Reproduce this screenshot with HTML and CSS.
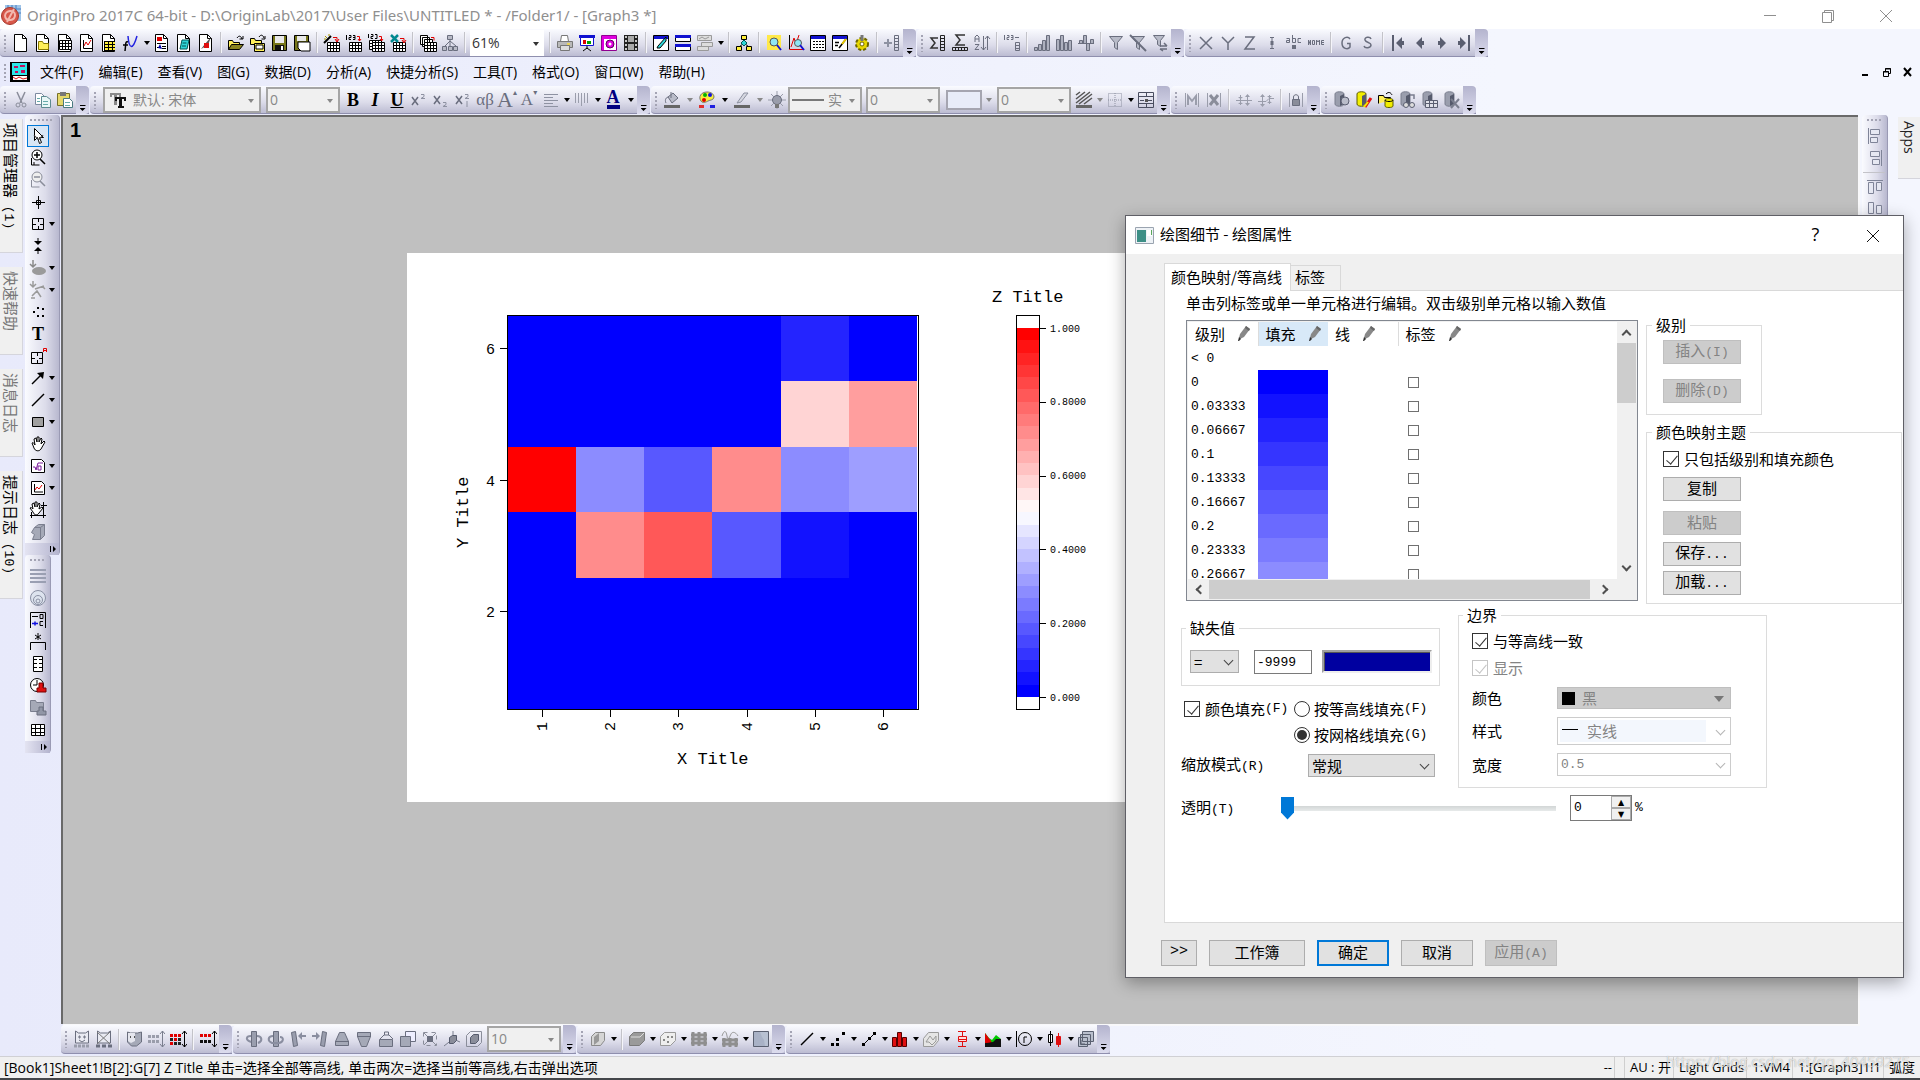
FILE: index.html
```html
<!DOCTYPE html>
<html lang="zh-CN">
<head>
<meta charset="utf-8">
<title>OriginPro 2017C 64-bit</title>
<link rel="stylesheet" href="styles.css">
</head>
<body>
<svg class="sprite" aria-hidden="true">
<defs>
<g id="page"><path d="M2.500 .5h8l4 4v13h-12z" fill="#fff" stroke="#000"/><path d="M10.500 .5v4h4" fill="none" stroke="#000"/></g>
<g id="tbl"><path d="M.5 .5h12v9h-12z" fill="#fff" stroke="#000"/><path d="M0 3.500h13M0 6.500h13M3.500 0v10M6.500 0v10M9.500 0v10" stroke="#000"/></g>
<g id="cyl"><path d="M2 3c0-3 9-3 9 0v10c0 3-9 3-9 0z"/><path d="M7 5v10l4-2V3z" fill="#555a6c" stroke="none"/></g>
</defs>
<symbol id="new" viewBox="0 0 18 18"><use href="#page"/></symbol>
<symbol id="folder-new" viewBox="0 0 18 18"><use href="#page"/><path d="M4.500 15.500v-8h4l1 2h5v6z" fill="#ffef5a" stroke="#8a7a00"/></symbol>
<symbol id="book" viewBox="0 0 18 18"><use href="#page"/><use href="#tbl" x="3" y="6"/></symbol>
<symbol id="graph" viewBox="0 0 18 18"><use href="#page"/><path d="M5.500 6v8.500H14" fill="none" stroke="#000"/><path d="M6 12l2-4 2 3 3-5" fill="none" stroke="#e00000"/></symbol>
<symbol id="matrix" viewBox="0 0 18 18"><use href="#page"/><path d="M4 7h11v9H4z" fill="#ffef3a"/><path d="M4 7.500h11M4 10.500h11M4 13.500h11M4 16.500h11M4.500 7v10M8.500 7v10M12.500 7v10" stroke="#000"/></symbol>
<symbol id="fx" viewBox="0 0 18 18"><path d="M6 2c1 14 5 14 9 0" fill="none" stroke="#2222e0" stroke-width="1.500"/><path d="M6 8c-3-1-2 2-3 9M1 11h5" fill="none" stroke="#000" stroke-width="1.500"/></symbol>
<symbol id="layout" viewBox="0 0 18 18"><use href="#page"/><path d="M4 3h5v4H4z" fill="#e00000"/><path d="M4 9.500h9M4 13.500h3M9 12.500h4M9 14.500h4" stroke="#000"/><path d="M5 14l2-4 2 5z" fill="#00a"/></symbol>
<symbol id="notes" viewBox="0 0 18 18"><use href="#page"/><path d="M7 6h7l-2 9H5z" fill="#2ed5d8" stroke="#055"/><path d="M7.500 9h4M7 12h4" stroke="#055"/></symbol>
<symbol id="image" viewBox="0 0 18 18"><use href="#page"/><path d="M4 15l4-5 6-7-3 8z" fill="#555"/><path d="M7 9h5v5H7z" fill="#e01010"/></symbol>
<symbol id="open" viewBox="0 0 18 18"><path d="M1.500 15.500v-9h4l1 2h6v3" fill="#ffef5a" stroke="#000"/><path d="M1.500 15.500l3-5h12l-4 5z" fill="#8a8420" stroke="#000"/><path d="M10 4c2-3 4-2 5 1M12.500 5H16V2" fill="none" stroke="#000"/></symbol>
<symbol id="open2" viewBox="0 0 18 18"><path d="M1.500 10.500v-6h4l1 2h6v4z" fill="#ffef5a" stroke="#000"/><path d="M5.500 17.500v-8h10v8z" fill="#ffef5a" stroke="#000"/><path d="M7 11h7v4H7z" fill="#fff" stroke="#000"/><path d="M10 3c2-3 4-2 5 1M12.500 5H16V2" fill="none" stroke="#000"/></symbol>
<symbol id="save" viewBox="0 0 18 18"><path d="M1.500 1.500h14v15h-14z" fill="#77761a" stroke="#000"/><path d="M4 2h9v7H4z" fill="#e9e9e9"/><path d="M4 11h9v5H4z" fill="#111"/><path d="M10 12h2v4h-2z" fill="#fff"/></symbol>
<symbol id="save2" viewBox="0 0 18 18"><path d="M1.500 1.500h14v15h-14z" fill="#77761a" stroke="#000"/><path d="M4 2h9v5H4z" fill="#e9e9e9"/><path d="M5 8h12v9H8l-3-3z" fill="#fff" stroke="#000"/></symbol>
<symbol id="imp1" viewBox="0 0 18 18"><use href="#tbl" x="4" y="8"/><path d="M1 9l7-7" stroke="#000" stroke-width="2"/><path d="M2 2l2 2M6 0v2M1 5h2" stroke="#a90"/><path d="M10 3.500h4v4M12 5l2 3 2-3" fill="none" stroke="#e00000"/></symbol>
<symbol id="imp2" viewBox="0 0 18 18"><use href="#tbl" x="4" y="8"/><path d="M1.500 1v5M4 1.500h2v2H4v2h2M8 1.500h2v4H8M8 3.500h2" fill="none" stroke="#000"/><path d="M12 2.500h2.500v4M13 5l1.500 2L16 5" fill="none" stroke="#e00000"/></symbol>
<symbol id="imp3" viewBox="0 0 18 18"><use href="#tbl" x="2" y="6"/><use href="#tbl" x="5" y="8"/><path d="M1.500 0v4M4 .5h2v2H4v2h2M8 .5h2v4H8" fill="none" stroke="#000"/><path d="M12 2.500h2.500v4M13 5l1.500 2L16 5" fill="none" stroke="#e00000"/></symbol>
<symbol id="xls" viewBox="0 0 18 18"><use href="#tbl" x="4" y="8"/><path d="M2 1l7 7M9 1L2 8" stroke="#00888f" stroke-width="2.500"/><path d="M11 4.500h4v4M13 6l2 3 2-3" fill="none" stroke="#e00000"/></symbol>
<symbol id="batch" viewBox="0 0 18 18"><path d="M1.500 1.500h7v9h-7z M3.500 3.500h7v9h-7z M5.500 5.500h8v10h-8z" fill="#fff" stroke="#000"/><use href="#tbl" x="5" y="8"/><path d="M12 3.500h3v3" fill="none" stroke="#e00000"/></symbol>
<symbol id="tree-g" viewBox="0 0 18 18"><path d="M6.500 1.500h5v4h-5z M1.500 12.500h4v4h-4z M7.500 12.500h4v4h-4z M12.500 12.500h4v4h-4z M9 6v6M9 7l-5 5M9 7l6 5" fill="#b8bac6" stroke="#6a6e7e"/></symbol>
<symbol id="tree" viewBox="0 0 18 18"><path d="M9 5v4M4 13l5-4 5 4" fill="none" stroke="#000"/><path d="M6.500 1.500h5v4h-5z M1.500 12.500h5v4h-5z M11.500 12.500h5v4h-5z" fill="#ffef3a" stroke="#000"/><path d="M6 9l3-3 3 3-3 3z" fill="#2ed5d8" stroke="#055"/></symbol>
<symbol id="print" viewBox="0 0 18 18"><path d="M4.500 7.500l1-6h6l1 6" fill="#fff" stroke="#777"/><path d="M1.500 7.500h15v6h-15z" fill="#b9b9b9" stroke="#777"/><path d="M4.500 11.500h9v5h-9z" fill="#ddd" stroke="#777"/><path d="M11 9h3v2h-3z" fill="#e8d35a"/></symbol>
<symbol id="slides" viewBox="0 0 18 18"><path d="M1 1h16v3H1z" fill="#1111d0"/><path d="M2.500 3.500h13v8h-13z" fill="#fff" stroke="#1111d0"/><path d="M9 12v3M5 17l4-3 4 3" fill="none" stroke="#000"/><path d="M5 6h3v4H5z" fill="#e00000"/><path d="M9 7h4v3H9z" fill="#00a000"/></symbol>
<symbol id="gallery" viewBox="0 0 18 18"><path d="M1.500 1.500h15v15h-15z" fill="#fff" stroke="#900090"/><path d="M2 2h14v3H2zM2 5h2v11H2z" fill="#e000e0"/><circle cx="10" cy="10" r="4" fill="#e000e0" stroke="#600060"/><circle cx="10" cy="10" r="1.500" fill="#fff"/></symbol>
<symbol id="film" viewBox="0 0 18 18"><path d="M2 1h14v16H2z" fill="#222"/><path d="M6 2h6v6H6z M6 10h6v6H6z" fill="#aaa"/><path d="M4 2v15M14 2v15" stroke="#fff" stroke-width="1.500" stroke-dasharray="2 2"/></symbol>
<symbol id="tool1" viewBox="0 0 18 18"><path d="M1.500 1.500h15v15h-15z" fill="#fff" stroke="#000"/><path d="M2 2h14v3H2z" fill="#1111d0"/><path d="M6 12l8-9v4l-6 7H5z" fill="#2ed5d8" stroke="#000"/></symbol>
<symbol id="tool2" viewBox="0 0 18 18"><path d="M1.500 1.500h15v6h-15z M1.500 10.500h15v6h-15z" fill="#fff" stroke="#000"/><path d="M1 1h16v3H1z M1 10h16v3H1z" fill="#1111d0"/></symbol>
<symbol id="tool3" viewBox="0 0 18 18"><path d="M1.500 1.500h14v5h-14z M5.500 8.500h11v4h-11z M1.500 12.500h11v4h-11z" fill="#ddd" stroke="#9a9a9a"/><path d="M3 5l3-2 3 2 4-2" fill="none" stroke="#9a9a9a"/></symbol>
<symbol id="zoom-y" viewBox="0 0 18 18"><path d="M2 1h14v15H2z" fill="#ffe94a"/><circle cx="9" cy="8" r="4" fill="#8fe6f5" stroke="#555"/><path d="M12 11l4 5" stroke="#1111d0" stroke-width="2"/></symbol>
<symbol id="zoom-x" viewBox="0 0 18 18"><path d="M2.500 1v14.500H17M4 13l3-9 2 6 3-9" fill="none" stroke="#e00000"/><path d="M2.500 1v14" stroke="#000"/><circle cx="11" cy="9" r="3.500" fill="#8fe6f5" stroke="#555"/><path d="M13 11l4 5" stroke="#1111d0" stroke-width="2"/></symbol>
<symbol id="results" viewBox="0 0 18 18"><path d="M1.500 1.500h15v15h-15z" fill="#fff" stroke="#000"/><path d="M2 2h14v3H2z" fill="#1111d0"/><path d="M4 7.500h11M4 10.500h11M4 13.500h11" stroke="#000" stroke-dasharray="2 1"/></symbol>
<symbol id="script" viewBox="0 0 18 18"><path d="M1.500 1.500h15v15h-15z" fill="#fff" stroke="#000"/><path d="M2 2h14v3H2z" fill="#1111d0"/><path d="M4 8.500h4M4 11.500h3M8 14l7-9" stroke="#000" stroke-width="1.500"/><path d="M11 10l4-5" stroke="#e8c800" stroke-width="2"/></symbol>
<symbol id="gear" viewBox="0 0 18 18"><circle cx="9" cy="10" r="6" fill="#e8d800" stroke="#6d6500" stroke-width="2" stroke-dasharray="3 2"/><circle cx="9" cy="10" r="2" fill="#fff" stroke="#6d6500"/><path d="M9 1v6" stroke="#777" stroke-width="3"/></symbol>
<symbol id="addcol" viewBox="0 0 18 18"><path d="M1 9h8M5 5v8" stroke="#8e92a2" stroke-width="2"/><path d="M11.500 1.500h4v15h-4zM11 4.500h5M11 7.500h5M11 10.500h5M11 13.500h5" fill="none" stroke="#6a6e7e"/></symbol>
<symbol id="sumcol" viewBox="0 0 18 18"><path d="M9 4H2l4 5-4 5h7" fill="none" stroke="#333" stroke-width="1.500"/><path d="M11.500 1.500h4v15h-4zM11 4.500h5M11 7.500h5M11 10.500h5M11 13.500h5" fill="none" stroke="#222"/></symbol>
<symbol id="sumrow" viewBox="0 0 18 18"><path d="M14 1H5l4 5-4 5h9" fill="none" stroke="#333" stroke-width="1.500"/><path d="M1.500 13.500h15v3h-15zM4.500 13v4M7.500 13v4M10.500 13v4M13.500 13v4" fill="none" stroke="#222"/></symbol>
<symbol id="sort" viewBox="0 0 18 18"><path d="M2 8V3l2-2 2 2v5M2 5h4M2 10.500h4l-4 5h4" fill="none" stroke="#6a6e7e"/><path d="M10.500 2v14M8 13l2.500 3 2.500-3M14.500 16V2M12 5l2.500-3L17 5" fill="none" stroke="#6a6e7e"/></symbol>
<symbol id="setcol" viewBox="0 0 18 18"><path d="M1.500 1v5M4 1.500h2v2H4v2h2M8 1.500h2v4H8M8 3.500h2M12 3.500h4M12.500 8.500h4v8h-4zM12 11.500h5M12 14.500h5" fill="none" stroke="#6a6e7e"/></symbol>
<symbol id="stair" viewBox="0 0 18 18"><path d="M1.500 13.500h3v3h-3zM5.500 10.500h3v6h-3zM9.500 6.500h3v10h-3zM13.500 1.500h3v15h-3z" fill="#aeb1bf" stroke="#6a6e7e"/></symbol>
<symbol id="hist" viewBox="0 0 18 18"><path d="M1.500 5.500h3v11h-3zM5.500 1.500h3v15h-3zM9.500 8.500h3v8h-3zM13.500 6.500h3v10h-3z" fill="#aeb1bf" stroke="#6a6e7e"/></symbol>
<symbol id="bars3" viewBox="0 0 18 18"><path d="M1 9.500h16M2.500 6.500h3v3h-3zM6.500 1.500h3v8h-3zM9.500 9.500h3v7h-3zM13.500 5.500h3v4h-3z" fill="#aeb1bf" stroke="#6a6e7e"/></symbol>
<symbol id="funnel" viewBox="0 0 18 18"><path d="M2.500 2.500h13l-5 6v7l-3-2v-5z" fill="#b8bbc8" stroke="#6a6e7e"/></symbol>
<symbol id="funnel-x" viewBox="0 0 18 18"><path d="M2.500 2.500h13l-5 6v7l-3-2v-5z" fill="#b8bbc8" stroke="#6a6e7e"/><path d="M1 1l16 16" stroke="#6a6e7e" stroke-width="2"/></symbol>
<symbol id="funnel-r" viewBox="0 0 18 18"><path d="M2.500 1.500h11l-4 5v6l-3-2v-4z" fill="#b8bbc8" stroke="#6a6e7e"/><path d="M9 12h7M13 9l3 3M16 15H9M12 17l-3-2" stroke="#6a6e7e" stroke-width="1.500"/></symbol>
<symbol id="lx" viewBox="0 0 18 18"><path d="M3 3l12 12M15 3L3 15" stroke="#6a6e7e" stroke-width="1.500"/></symbol>
<symbol id="ly" viewBox="0 0 18 18"><path d="M3 3l6 6v7M15 3L9 9" fill="none" stroke="#6a6e7e" stroke-width="1.500"/></symbol>
<symbol id="lz" viewBox="0 0 18 18"><path d="M4 3h9L4 15h10" fill="none" stroke="#6a6e7e" stroke-width="1.500"/></symbol>
<symbol id="err" viewBox="0 0 18 18"><path d="M9 3v12M7 3.500h4M7 14.500h4" stroke="#6a6e7e"/><path d="M7.500 7h3v4h-3z" fill="#6a6e7e"/></symbol>
<symbol id="abc" viewBox="0 0 18 18"><path d="M1.500 4.500h3v4h-3v-2h3M7.500 1v7.500h3v-4h-3M16 4.500h-3v4h3" fill="none" stroke="#6a6e7e"/><path d="M7 11h4v4H7z" fill="#6a6e7e"/></symbol>
<symbol id="none" viewBox="0 0 18 18"><path d="M1.500 11V6l2 5V6M5.500 6.500h2v4h-2zM9.500 11V6l1.500 2 1.500-2v5M17 6.500h-2.500v4H17M15 8.500h2" fill="none" stroke="#6a6e7e"/></symbol>
<symbol id="lg" viewBox="0 0 18 18"><path d="M13 5c-2-3-8-2-8 4s6 7 8 4V9.500h-3" fill="none" stroke="#6a6e7e" stroke-width="1.500"/></symbol>
<symbol id="ls" viewBox="0 0 18 18"><path d="M12 5c-1-3-7-2-6 1s6 2 6 5-6 4-7 1" fill="none" stroke="#6a6e7e" stroke-width="1.500"/></symbol>
<symbol id="first" viewBox="0 0 18 18"><path d="M4 1v16" stroke="#5a5e70" stroke-width="2"/><path d="M7 9l6-6v4h2v4h-2v4z" fill="#5a5e70"/></symbol>
<symbol id="prev" viewBox="0 0 18 18"><path d="M5 9l6-6v4h2v4h-2v4z" fill="#5a5e70"/></symbol>
<symbol id="next" viewBox="0 0 18 18"><path d="M13 9L7 3v4H5v4h2v4z" fill="#5a5e70"/></symbol>
<symbol id="last" viewBox="0 0 18 18"><path d="M14 1v16" stroke="#5a5e70" stroke-width="2"/><path d="M11 9L5 3v4H3v4h2v4z" fill="#5a5e70"/></symbol>
<symbol id="cut" viewBox="0 0 18 18"><path d="M5 1l5 11M13 1L8 12" stroke="#8a8d9a" stroke-width="1.500"/><circle cx="6" cy="14" r="2" fill="none" stroke="#8a8d9a"/><circle cx="12" cy="14" r="2" fill="none" stroke="#8a8d9a"/></symbol>
<symbol id="copy" viewBox="0 0 18 18"><path d="M1.500 2.500h6l3 3v8h-9z" fill="#fff" stroke="#7d8aa0"/><path d="M7.500 5.500h5l4 3v8h-9z" fill="#e9f7f7" stroke="#5d8a90"/><path d="M9 10.500h5M9 13.500h5M3 7.500h3M3 10.500h3" stroke="#6aa"/></symbol>
<symbol id="paste" viewBox="0 0 18 18"><path d="M1.500 2.500h12v12h-12z" fill="#e5d86a" stroke="#77702a"/><path d="M4 1h6v4H4z" fill="#777"/><path d="M7.500 7.500h6l3 3v6h-9z" fill="#fff" stroke="#4a7a80"/><path d="M9 11.500h5M9 14.500h5" stroke="#6aa"/></symbol>
<symbol id="sup" viewBox="0 0 18 18"><path d="M2 6l6 8M8 6l-6 8" stroke="#6a6e7e" stroke-width="1.500"/><path d="M11 3.500h3v2l-3 2h4" fill="none" stroke="#8e92a2"/></symbol>
<symbol id="sub" viewBox="0 0 18 18"><path d="M2 5l6 8M8 5l-6 8" stroke="#6a6e7e" stroke-width="1.500"/><path d="M11 11.500h3v2l-3 2h4" fill="none" stroke="#8e92a2"/></symbol>
<symbol id="supsub" viewBox="0 0 18 18"><path d="M2 5l6 8M8 5l-6 8" stroke="#6a6e7e" stroke-width="1.500"/><path d="M11 3.500h3v2l-3 2h4M13 10v6" fill="none" stroke="#8e92a2"/></symbol>
<symbol id="alignl" viewBox="0 0 18 18"><path d="M2 3.500h14M2 6.500h9M2 9.500h14M2 12.500h9M2 15.500h14" stroke="#8e92a2"/></symbol>
<symbol id="vlines" viewBox="0 0 18 18"><path d="M2.500 2v10M5.500 2v10M8.500 2v13M11.500 2v10M14.500 2v10" stroke="#9a9dab"/></symbol>
<symbol id="bucket" viewBox="0 0 18 18"><path d="M5 6l5-4 5 5-6 5z" fill="#b8bbc8" stroke="#6a6e7e"/><path d="M5 6c-3 1-3 4-2 6M8 1v6" fill="none" stroke="#6a6e7e"/><path d="M1 14h16v3H1z" fill="#666"/></symbol>
<symbol id="palette" viewBox="0 0 18 18"><path d="M9 1c-6 0-9 5-6 9 2 3 5 1 7 0 2-1 6-1 6-4s-3-5-7-5z" fill="#f7ee3a" stroke="#777"/><circle cx="7" cy="4" r="2" fill="#00b400"/><circle cx="12" cy="4" r="2" fill="#1111e0"/><circle cx="6" cy="9" r="2" fill="#e00000"/><path d="M1 14h5v3H1z" fill="#e03030"/><path d="M6 14h6v3H6z" fill="#c8c8f8"/><path d="M12 14h5v3h-5z" fill="#2020e0"/></symbol>
<symbol id="pen" viewBox="0 0 18 18"><path d="M4 12l7-10h4l-7 9z" fill="#d5d7e0" stroke="#8e92a2"/><path d="M1 14h16v3H1z" fill="#666"/></symbol>
<symbol id="bulb" viewBox="0 0 18 18"><path d="M9 0v18M0 9h18M3 3l12 12M15 3L3 15" stroke="#9a9dab"/><circle cx="9" cy="9" r="4.500" fill="#9a9dab" stroke="#6a6e7e"/><path d="M7 13h4v4H7z" fill="#777"/></symbol>
<symbol id="hatch" viewBox="0 0 18 18"><path d="M1 4l4-3M1 8l9-7M1 12L15 1M4 13L17 3M9 13l8-6" stroke="#555" stroke-width="1.500"/><path d="M1 14h16v3H1z" fill="#666"/></symbol>
<symbol id="bord" viewBox="0 0 18 18"><path d="M2.500 2.500h13v13h-13zM9 2v14M2 9h14" fill="none" stroke="#8e92a2" stroke-dasharray="1 1"/></symbol>
<symbol id="merge" viewBox="0 0 18 18"><path d="M1.500 1.500h15v15h-15zM1 5.500h16M1 12.500h16M9.500 1v4M9.500 13v4M3 9.500h4M11 9.500h4" fill="none" stroke="#4a4e60"/><path d="M8 8h3v3H8z" fill="#555"/></symbol>
<symbol id="mask" viewBox="0 0 18 18"><path d="M2.500 2v14M15.500 2v14" stroke="#9a9dab"/><path d="M5 14V5l4 5 4-5v9" fill="none" stroke="#9a9dab" stroke-width="2"/></symbol>
<symbol id="maskx" viewBox="0 0 18 18"><path d="M2.500 2v14M15.500 2v14" stroke="#9a9dab"/><path d="M5 4l8 10M13 4L5 14" stroke="#8a8d9a" stroke-width="3"/></symbol>
<symbol id="swap" viewBox="0 0 18 18"><path d="M5.500 4v10M12.500 4v10M1 9.500h16" stroke="#9a9dab"/><path d="M3 6h5L5.500 8zM3 13h5l-2.500-2zM10 6h5l-2.500-3zM10 12h5l-2.500 3z" fill="#9a9dab"/></symbol>
<symbol id="swap2" viewBox="0 0 18 18"><path d="M5.500 4v10M12.500 4v9M1 10.500h8l3-3h5" fill="none" stroke="#9a9dab"/><path d="M3 6h5L5.500 3zM3 13h5l-2.500 3zM10 5h5l-2.500 2zM10 12h5l-2.500-2z" fill="#9a9dab"/></symbol>
<symbol id="lock" viewBox="0 0 18 18"><path d="M2.500 2v14M15.500 2v14" stroke="#9a9dab"/><path d="M5.500 8.500h7v6h-7z" fill="#8a8d9a" stroke="#6a6e7e"/><path d="M6.500 8V6c0-3 5-3 5 0v2" fill="none" stroke="#6a6e7e"/></symbol>
<symbol id="db" viewBox="0 0 18 18"><use href="#cyl" fill="#9a9ead" stroke="#7a7e8e"/><circle cx="12" cy="10" r="4" fill="#b9bcc9" stroke="#5a5e70"/></symbol>
<symbol id="db-y" viewBox="0 0 18 18"><use href="#cyl" fill="#f2ee00" stroke="#5d5a00"/><path d="M10 16l6-9" stroke="#e01010" stroke-width="3"/><path d="M9 16l4-5" stroke="#f2ee00" stroke-width="2"/></symbol>
<symbol id="db-o" viewBox="0 0 18 18"><path d="M1.500 12.500v-8h5l1 2h6v3" fill="#ffef5a" stroke="#000"/><path d="M8 9c0-2 8-2 8 0v6c0 2-8 2-8 0z" fill="#f2ee00" stroke="#5d5a00"/><path d="M8 9c0 2 8 2 8 0M9 3c3-3 5-1 6 1" fill="none" stroke="#000"/></symbol>
<symbol id="db-g" viewBox="0 0 18 18"><use href="#cyl" fill="#9a9ead" stroke="#7a7e8e"/><circle cx="7" cy="14" r="2.500" fill="#ddd" stroke="#5a5e70"/><circle cx="13" cy="14" r="2.500" fill="#ddd" stroke="#5a5e70"/><path d="M11 4h4v4" fill="none" stroke="#7a7e8e" stroke-width="1.500"/></symbol>
<symbol id="db-t" viewBox="0 0 18 18"><use href="#cyl" fill="#9a9ead" stroke="#7a7e8e"/><path d="M4.500 9.500h12v7h-12zM4 12.500h13M8.500 9v8M12.500 9v8" fill="#dfe0e8" stroke="#5a5e70"/></symbol>
<symbol id="db-x" viewBox="0 0 18 18"><use href="#cyl" fill="#9a9ead" stroke="#7a7e8e"/><path d="M8 8l8 9M16 8l-8 9" stroke="#7a7e8e" stroke-width="2"/></symbol>
<symbol id="arrow" viewBox="0 0 18 18"><path d="M5.500 1.500v12l3-3 2 6 2-1-2-5h4z" fill="#fff" stroke="#000"/></symbol>
<symbol id="zin" viewBox="0 0 18 18"><circle cx="8" cy="6" r="5" fill="#fff" stroke="#000"/><path d="M5 6h6M8 3v6M11 10l5 5" stroke="#000" stroke-width="1.500"/><path d="M2.500 9v7h8M5 16v-3" fill="none" stroke="#000"/></symbol>
<symbol id="zout" viewBox="0 0 18 18"><circle cx="8" cy="6" r="5" fill="#eee" stroke="#8a8d9a"/><path d="M5 6h6M11 10l5 5" stroke="#8a8d9a" stroke-width="1.500"/><path d="M2.500 9v7h8" fill="none" stroke="#8a8d9a"/></symbol>
<symbol id="cross" viewBox="0 0 18 18"><path d="M3 9.500h13M9.500 3v13M7.500 7.500h4v4h-4z" fill="none" stroke="#000"/></symbol>
<symbol id="region" viewBox="0 0 18 18"><path d="M3.500 3.500h11v11h-11zM3 9.500h4M11 9.500h4M9.500 3v4M9.500 11v4" fill="none" stroke="#000"/></symbol>
<symbol id="range" viewBox="0 0 18 18"><path d="M9 1v5M9 12v5" stroke="#000"/><path d="M5 4h8L9 8zM5 14h8l-4-4z" fill="#000"/></symbol>
<symbol id="blob" viewBox="0 0 18 18"><path d="M4 1v6M1 5l3 3 3-3" fill="none" stroke="#8a8a8a" stroke-width="1.500"/><ellipse cx="10" cy="12" rx="7" ry="4" fill="#9a9a9a"/></symbol>
<symbol id="runner" viewBox="0 0 18 18"><path d="M4 0v5M1 3l3 3 3-3M3 15l5-5 4 6M6 8l9-3M13 5l3 3M2 17h4" fill="none" stroke="#9a9a9a" stroke-width="1.500"/></symbol>
<symbol id="dots" viewBox="0 0 18 18"><path d="M4 8h2v2H4zM8 4h2v2H8zM13 5h2v2h-2zM8 12h2v2H8zM13 12h2v2h-2z" fill="#000"/></symbol>
<symbol id="regiona" viewBox="0 0 18 18"><path d="M2.500 5.500h11v11h-11zM2 11.500h4M10 11.500h4M8.500 5v4M8.500 13v4" fill="none" stroke="#000"/><path d="M14.500 5V1.500h3V5M14 3.500h4" fill="none" stroke="#e00000"/></symbol>
<symbol id="arr" viewBox="0 0 18 18"><path d="M3 15L13 5" stroke="#000" stroke-width="1.500"/><path d="M8 4l7-1-1 7z" fill="#000"/></symbol>
<symbol id="line" viewBox="0 0 18 18"><path d="M3 15L15 3" stroke="#000" stroke-width="1.500"/></symbol>
<symbol id="rect" viewBox="0 0 18 18"><path d="M3.500 4.500h11v9h-11z" fill="#a0a0a0" stroke="#000"/></symbol>
<symbol id="hand" viewBox="0 0 18 18"><path d="M3 8c1-1 2 0 3 2L5 4l2-1 1 4V2h2v5l2-4 1 1-1 5 3-3 1 1-4 7c-2 3-6 2-7-1z" fill="#fff" stroke="#000"/></symbol>
<symbol id="eq" viewBox="0 0 18 18"><path d="M2.500 2.500h10l3 3v10h-13z" fill="#fff" stroke="#000"/><path d="M4 10h2l1 3 2-7h5M9 9h3v4H9z" fill="none" stroke="#7a1a9a"/></symbol>
<symbol id="gobj" viewBox="0 0 18 18"><path d="M2.500 2.500h10l3 3v10h-13z" fill="#fff" stroke="#000"/><path d="M5.500 5v8H14" fill="none" stroke="#000"/><path d="M6 11l2-3 2 2 3-4" fill="none" stroke="#e00000"/></symbol>
<symbol id="hand2" viewBox="0 0 18 18"><path d="M14.500 1v16M1 14.500h16M2.500 11v6M12 4.500h6" stroke="#000"/><path d="M1 7c1-1 2 0 3 1L3 3l2-1 1 4V1h2v5l2-4 1 1-1 5 3-2 1 1-4 5c-2 3-5 2-6-1z" fill="#fff" stroke="#000"/></symbol>
<symbol id="cube" viewBox="0 0 18 18"><path d="M5.500 4.500l4-3h6v11l-4 4h-8l2-5-3-2z" fill="#a5a9b7" stroke="#7a7e8e"/><path d="M5.500 4.500h6v12M11.500 4.500l4-3" fill="none" stroke="#7a7e8e"/></symbol>
<symbol id="lines4" viewBox="0 0 18 18"><path d="M1 3h16M1 7h16M1 11h16M1 15h16" stroke="#9a9fb2" stroke-width="2"/></symbol>
<symbol id="rings" viewBox="0 0 18 18"><circle cx="9" cy="9" r="7.500" fill="#dde3ee" stroke="#8a90a4"/><circle cx="9" cy="11" r="4.500" fill="none" stroke="#8a90a4"/><circle cx="9" cy="12" r="2" fill="none" stroke="#8a90a4"/></symbol>
<symbol id="legend" viewBox="0 0 18 18"><path d="M1.500 17V1.500h15V17M3 5.500h6" fill="none" stroke="#000"/><path d="M11 3.500h3v4h-3zM14 10.500h-3v4h3" fill="none" stroke="#000"/><path d="M3 12.500h6M6 10.500v4" stroke="#1111e0" stroke-width="1.500"/></symbol>
<symbol id="star" viewBox="0 0 18 18"><path d="M1.500 17V9.500h15V17M9 0v7M6 2l6 4M12 2L6 6" fill="none" stroke="#000"/></symbol>
<symbol id="scale" viewBox="0 0 18 18"><path d="M4.500 1.500h9v15h-9z" fill="#fff" stroke="#000"/><path d="M5 4.500h3M5 8.500h3M5 12.500h3M10 4.500h3M10 8.500h3M10 12.500h3" stroke="#000"/></symbol>
<symbol id="clock" viewBox="0 0 18 18"><circle cx="8" cy="8" r="6.500" fill="#fff" stroke="#000"/><path d="M8 3v5H4" fill="none" stroke="#000"/><path d="M10 6h4v5h3v4H8v-4h2z" fill="#e01010" stroke="#700"/></symbol>
<symbol id="stamp" viewBox="0 0 18 18"><path d="M1.500 1.500h5l1 2h7v9h-13z" fill="#a5a9b7" stroke="#7a7e8e"/><path d="M10 8h4v4h3v4H8v-4h2z" fill="#9196a6" stroke="#6a6e7e"/></symbol>
<symbol id="tgrid" viewBox="0 0 18 18"><path d="M2.500 3.500h13v11h-13zM2 7.500h14M2 11.500h14M6.500 3v12M11.500 3v12" fill="#fff" stroke="#000"/></symbol>
<symbol id="al1" viewBox="0 0 18 18"><path d="M2.500 1v16M4.500 2.500h9v5h-9zM4.500 10.500h7v5h-7z" fill="#e6e8f2" stroke="#7f8498"/></symbol>
<symbol id="al2" viewBox="0 0 18 18"><path d="M15.500 1v16M4.500 2.500h9v5h-9zM6.500 10.500h7v5h-7z" fill="#e6e8f2" stroke="#7f8498"/></symbol>
<symbol id="al3" viewBox="0 0 18 18"><path d="M1 2.500h16M2.500 4.500h5v11h-5zM10.500 4.500h5v8h-5z" fill="#e6e8f2" stroke="#7f8498"/></symbol>
<symbol id="al4" viewBox="0 0 18 18"><path d="M1 15.500h16M2.500 2.500h5v11h-5zM10.500 5.500h5v8h-5z" fill="#e6e8f2" stroke="#7f8498"/></symbol>
<symbol id="cat" viewBox="0 0 18 18"><path d="M2.500 1l3 2h7l3-2v12h-13z" fill="#e9eaf2" stroke="#6a6e7e"/><path d="M6 6h1v2H6zM11 6h1v2h-1zM6 10l3 2 3-2" fill="none" stroke="#6a6e7e"/><path d="M1 16h16" stroke="#9a9dab" stroke-width="3" stroke-dasharray="3 1"/></symbol>
<symbol id="catx" viewBox="0 0 18 18"><path d="M2.500 1l3 2h7l3-2v12h-13z" fill="#e9eaf2" stroke="#6a6e7e"/><path d="M2 2l13 12M15 2L2 14" stroke="#777"/><path d="M1 16h16" stroke="#6a6e7e" stroke-width="3" stroke-dasharray="4 2"/></symbol>
<symbol id="face" viewBox="0 0 18 18"><path d="M2.500 2l3 1h7l4-1v10l-5 4h-5l-4-4z" fill="#a5a9b7" stroke="#6a6e7e"/><path d="M3 3h7v8l-4 2-3-2z" fill="#e5e6ee"/><path d="M5 6h1v2H5zM9 6h1v2H9z" fill="#555"/></symbol>
<symbol id="mg" viewBox="0 0 18 18"><path d="M1 5h3v3H1zM5 5h3v3H5zM9 5h3v3H9zM1 10h3v3H1zM5 10h3v3H5zM9 10h3v3H9z" fill="#9a9dab"/><path d="M15.500 1v16M13 4l2.500-3L18 4M13 14l2.500 3 2.500-3" fill="none" stroke="#7a7e8e"/></symbol>
<symbol id="mr" viewBox="0 0 18 18"><path d="M1 4h3v3H1zM5 4h3v3H5zM9 4h3v3H9zM5 8h3v3H5zM1 12h3v3H1z" fill="#e00000"/><path d="M1 8h3v3H1zM9 8h3v3H9zM5 12h3v3H5zM9 12h3v3H9z" fill="#222"/><path d="M15.500 1v16M13 4l2.500-3L18 4M13 14l2.500 3 2.500-3" fill="none" stroke="#000"/></symbol>
<symbol id="mb" viewBox="0 0 18 18"><path d="M1 4h3v3H1zM5 4h3v3H5zM9 4h3v3H9z" fill="#e00000"/><path d="M1 10h3v3H1zM5 10h3v3H5zM9 10h3v3H9z" fill="#111"/><path d="M15.500 1v16M13 4l2.500-3L18 4M13 14l2.500 3 2.500-3" fill="none" stroke="#000"/></symbol>
<symbol id="rotl" viewBox="0 0 18 18"><path d="M6.500 1.500h5v15h-5z" fill="#9a9eae" stroke="#6a6e7e"/><path d="M6 12c-6-2-5-6 0-6M12 6c5 0 6 5 1 7" fill="none" stroke="#8a8ea0" stroke-width="2"/></symbol>
<symbol id="rotr" viewBox="0 0 18 18"><path d="M6.500 1.500h5v15h-5z" fill="#9a9eae" stroke="#6a6e7e"/><path d="M6 6c-5 0-6 5-1 7h7c5-1 5-6 1-6" fill="none" stroke="#8a8ea0" stroke-width="2"/></symbol>
<symbol id="tiltl" viewBox="0 0 18 18"><path d="M2.500 2.500l4-1 2 14-4 1z" fill="#9a9eae" stroke="#6a6e7e"/><path d="M9 6l4-4v3h4v2h-4v3z" fill="#8a8ea0"/></symbol>
<symbol id="tiltr" viewBox="0 0 18 18"><path d="M15.500 2.500l-4-1-2 14 4 1z" fill="#9a9eae" stroke="#6a6e7e"/><path d="M9 6L5 2v3H1v2h4v3z" fill="#8a8ea0"/></symbol>
<symbol id="trap" viewBox="0 0 18 18"><path d="M6.500 2.500h5l4 9v4h-13v-4z" fill="#a5a9b7" stroke="#6a6e7e"/><path d="M2 11.500h14" stroke="#6a6e7e"/></symbol>
<symbol id="trap2" viewBox="0 0 18 18"><path d="M2.500 2.500h13v4l-4 10h-5l-4-10z" fill="#a5a9b7" stroke="#6a6e7e"/><path d="M2 6.500h14" stroke="#6a6e7e"/></symbol>
<symbol id="box3" viewBox="0 0 18 18"><path d="M2.500 9.500h13v7h-13z" fill="#a5a9b7" stroke="#6a6e7e"/><path d="M3 9l4-4h5l4 4M7.500 5v-3h4v3" fill="none" stroke="#6a6e7e"/></symbol>
<symbol id="box4" viewBox="0 0 18 18"><path d="M6.500 1.500h10v10h-10z" fill="#eef" stroke="#6a6e7e"/><path d="M1.500 6.500h10v10h-10z" fill="#a5a9b7" stroke="#6a6e7e"/></symbol>
<symbol id="expand" viewBox="0 0 18 18"><path d="M2.500 2.500h13v13h-13z" fill="none" stroke="#8a8d9a" stroke-dasharray="4 4"/><path d="M3 3l12 12M15 3L3 15" stroke="#8a8d9a"/><path d="M6 6h6v6H6z" fill="#6a6e7e"/></symbol>
<symbol id="axes" viewBox="0 0 18 18"><path d="M10 1v8l7 3M10 9l-9 7" fill="none" stroke="#7a7e8e"/><path d="M6.500 7.500l3-2h4v5l-3 3h-4z" fill="#8a8d9a" stroke="#555a6c"/></symbol>
<symbol id="cube2" viewBox="0 0 18 18"><path d="M1.500 5.500l4-4h11v11l-4 4h-11z" fill="none" stroke="#8a8d9a"/><path d="M5.500 7.500l3-3h5v6l-3 3h-5z" fill="#8a8d9a" stroke="#555a6c"/></symbol>
<symbol id="cube3" viewBox="0 0 18 18"><path d="M2.500 6.500l4-4h9v8l-4 5h-9z" fill="#d5d5d5" stroke="#8a8a8a"/><path d="M5 15V7l5-4v8z" fill="#999"/></symbol>
<symbol id="cube4" viewBox="0 0 18 18"><path d="M1.500 6.500l4-4h11v8l-5 5h-10z" fill="#9a9a9a" stroke="#7a7a7a"/><path d="M3 7h9l4-4" fill="none" stroke="#ddd"/></symbol>
<symbol id="cube5" viewBox="0 0 18 18"><path d="M1.500 6.500l4-4h11v8l-5 5h-10z" fill="#eee" stroke="#9a9a9a"/><path d="M4 9h2v2H4zM8 11h2v2H8zM8 6h2v2H8zM12 6h2v2h-2z" fill="#888"/></symbol>
<symbol id="gridg" viewBox="0 0 18 18"><path d="M3 2v14M9 2v14M15 2v14M1 5h16M1 9h16M1 13h16" stroke="#8f8f8f" stroke-width="3"/></symbol>
<symbol id="gridw" viewBox="0 0 18 18"><path d="M1 6c2-6 4-6 5 0s3 0 4-2 4-3 7 2" fill="none" stroke="#999"/><path d="M3 8v9M9 8v9M15 8v9M1 10h16M1 14h16" stroke="#8f8f8f" stroke-width="3"/></symbol>
<symbol id="surf" viewBox="0 0 18 18"><path d="M1.500 1.500h15v15h-15z" fill="#a9b2c6" stroke="#5a6070"/><path d="M8 2l2 5 2 3 1 6h3V2z" fill="#b8c1d2"/></symbol>
<symbol id="scat" viewBox="0 0 18 18"><path d="M2 13h3v3H2zM7 8h3v3H7zM7 13h3v3H7zM13 2h3v3h-3z" fill="#000"/></symbol>
<symbol id="lsym" viewBox="0 0 18 18"><path d="M3 15L15 3" stroke="#000"/><path d="M2 13h3v3H2zM8 7h3v3H8zM13 2h3v3h-3z" fill="#000"/></symbol>
<symbol id="cols" viewBox="0 0 18 18"><path d="M1.500 7.500h4v9h-4zM6.500 2.500h4v14h-4zM11.500 7.500h4v9h-4z" fill="#e01010" stroke="#500"/></symbol>
<symbol id="contour" viewBox="0 0 18 18"><path d="M1.500 8.500l5-6h10v8l-5 6h-10zM4 12l4-6 3 4 3-4v5l-4 4-3-3z" fill="#e5e5e5" stroke="#9a9a9a"/></symbol>
<symbol id="boxp" viewBox="0 0 18 18"><path d="M5 1.500h8M9.500 1v5M9.500 12v5M5 16.500h8M5.500 6.500h8v5h-8zM5 9.500h9" fill="#fdd" stroke="#e01010"/></symbol>
<symbol id="area" viewBox="0 0 18 18"><path d="M1 3l4 5 3 2 4-5 5 4v8H1z" fill="#00c800"/><path d="M1 3l6 8 3 6H1z" fill="#e00000"/><path d="M1 13l8-1 3-3 5 0v8H1z" fill="#111"/><path d="M1 4l6 8-6 1z" fill="#e00000"/></symbol>
<symbol id="polar" viewBox="0 0 18 18"><circle cx="10" cy="9" r="6.500" fill="none" stroke="#000"/><path d="M1.500 1v16M9 13V7h3" fill="none" stroke="#000"/></symbol>
<symbol id="candle" viewBox="0 0 18 18"><path d="M4.500 1v15M2.500 4.500h4v8h-4z" fill="#fff" stroke="#000"/><path d="M12.500 3v14M10.500 6.500h4v8h-4z" fill="#e01010" stroke="#e01010"/></symbol>
<symbol id="stack" viewBox="0 0 18 18"><path d="M5.500 1.500h11v10h-11zM3.500 4.500h10v10h-10zM1.500 7.500h9v9h-9z" fill="#b9bfcd" stroke="#5a6070"/><path d="M4 10v4h4" fill="none" stroke="#5a6070"/></symbol>
<symbol id="pencil" viewBox="0 0 14 18"><path d="M2 13l1-4 6-8 4 3-6 8-4 2z" fill="#888"/><path d="M9 1l4 3-1 2-4-3z" fill="#666"/><path d="M2 12l2 2-2 2H1z" fill="#333"/></symbol>
</svg>

<header class="titlebar">
  <svg class="logo" viewBox="0 0 22 22"><path d="M4 1h16v16H4z" fill="#9fc4e8"/><path d="M7 1v16M11 1v16M15 1v16M4 5h16M4 9h16" stroke="#4b7fc0"/><circle cx="9" cy="12" r="8.500" fill="#d8574a" stroke="#a8382c"/><path d="M4 12c0-6 10-7 10-1s-9 7-10 1M13 5L6 18" fill="none" stroke="#f2b8ae" stroke-width="2"/></svg>
  <h1>OriginPro 2017C 64-bit - D:\OriginLab\2017\User Files\UNTITLED * - /Folder1/ - [Graph3 *]</h1>
  <div class="wincontrols">
    <button aria-label="最小化"><svg viewBox="0 0 14 14"><path d="M1 6.500h12"/></svg></button>
    <button aria-label="还原"><svg viewBox="0 0 14 14"><path d="M1.500 3.500h9v10h-9zM3.500 3V1.500h9v10H11"/></svg></button>
    <button aria-label="关闭"><svg viewBox="0 0 14 14"><path d="M1 1l12 12M13 1L1 13"/></svg></button>
  </div>
</header>

<div class="row">
  <div class="bar">
    <button><svg><use href="#new"/></svg></button><button><svg><use href="#folder-new"/></svg></button><button><svg><use href="#book"/></svg></button><button><svg><use href="#graph"/></svg></button><button><svg><use href="#matrix"/></svg></button><button><svg><use href="#fx"/></svg></button><button class="dd"></button><button><svg><use href="#layout"/></svg></button><button><svg><use href="#notes"/></svg></button><button><svg><use href="#image"/></svg></button><hr>
    <button><svg><use href="#open"/></svg></button><button><svg><use href="#open2"/></svg></button><button><svg><use href="#save"/></svg></button><button><svg><use href="#save2"/></svg></button><hr>
    <button><svg><use href="#imp1"/></svg></button><button><svg><use href="#imp2"/></svg></button><button><svg><use href="#imp3"/></svg></button><button><svg><use href="#xls"/></svg></button><hr>
    <button><svg><use href="#batch"/></svg></button><button><svg><use href="#tree-g"/></svg></button><hr>
    <span class="combo zoomlevel"><input value="61%" aria-label="缩放"></span><hr>
    <button><svg><use href="#print"/></svg></button><button><svg><use href="#slides"/></svg></button><button><svg><use href="#gallery"/></svg></button><button><svg><use href="#film"/></svg></button><hr>
    <button><svg><use href="#tool1"/></svg></button><button><svg><use href="#tool2"/></svg></button><button><svg><use href="#tool3"/></svg></button><button class="dd"></button><hr>
    <button><svg><use href="#tree"/></svg></button><hr>
    <button><svg><use href="#zoom-y"/></svg></button><button><svg><use href="#zoom-x"/></svg></button><button><svg><use href="#results"/></svg></button><button><svg><use href="#script"/></svg></button><button><svg><use href="#gear"/></svg></button><hr>
    <button><svg><use href="#addcol"/></svg></button>
    <button class="more"></button>
  </div>
  <div class="bar">
    <button><svg><use href="#sumcol"/></svg></button><button><svg><use href="#sumrow"/></svg></button><button><svg><use href="#sort"/></svg></button><hr>
    <button><svg><use href="#setcol"/></svg></button><hr>
    <button><svg><use href="#stair"/></svg></button><button><svg><use href="#hist"/></svg></button><button><svg><use href="#bars3"/></svg></button><hr>
    <button><svg><use href="#funnel"/></svg></button><button><svg><use href="#funnel-x"/></svg></button><button><svg><use href="#funnel-r"/></svg></button>
    <button class="more"></button>
  </div>
  <div class="bar">
    <button><svg><use href="#lx"/></svg></button><button><svg><use href="#ly"/></svg></button><button><svg><use href="#lz"/></svg></button><button><svg><use href="#err"/></svg></button><button><svg><use href="#abc"/></svg></button><button><svg><use href="#none"/></svg></button><hr>
    <button><svg><use href="#lg"/></svg></button><button><svg><use href="#ls"/></svg></button><hr>
    <button><svg><use href="#first"/></svg></button><button><svg><use href="#prev"/></svg></button><button><svg><use href="#next"/></svg></button><button><svg><use href="#last"/></svg></button>
    <button class="more"></button>
  </div>
</div>

<nav class="menubar">
  <svg class="childicon" viewBox="0 0 20 20"><path d="M0 0h20v20H0z" fill="#000"/><path d="M2 1h15v12H2z" fill="#2ee6ea"/><path d="M3 14h14v4H3z" fill="#fff"/><path d="M4 4h4v2H4zM10 3h5v2h-5zM5 9h3v2H5zM11 8h4v3h-4z" fill="#c01060"/><path d="M3 15l3 2 3-2 4 2 4-1" stroke="#e01010" fill="none"/></svg>
  <a href="#">文件(F)</a><a href="#">编辑(E)</a><a href="#">查看(V)</a><a href="#">图(G)</a><a href="#">数据(D)</a><a href="#">分析(A)</a><a href="#">快捷分析(S)</a><a href="#">工具(T)</a><a href="#">格式(O)</a><a href="#">窗口(W)</a><a href="#">帮助(H)</a>
  <div class="childcontrols">
    <button aria-label="最小化"><svg viewBox="0 0 10 10"><path d="M1 8h6" stroke-width="2"/></svg></button>
    <button aria-label="还原"><svg viewBox="0 0 10 10"><path d="M1.500 4.500h5v5h-5zM1 5h6M3.500 4V1.500h5v5H7M3 2h6"/></svg></button>
    <button aria-label="关闭"><svg viewBox="0 0 10 10"><path d="M1 1l7 8M8 1L1 9" stroke-width="2"/></svg></button>
  </div>
</nav>

<div class="row">
  <div class="bar">
    <button><svg><use href="#cut"/></svg></button><button><svg><use href="#copy"/></svg></button><button><svg><use href="#paste"/></svg></button>
    <button class="more"></button>
  </div>
  <div class="bar">
    <span class="combo off font"><svg viewBox="0 0 18 18"><path d="M1 2h11v4h-2V4H8v10H5V4H3v2H1z" fill="#8a8a8a"/><path d="M6 6h11v4h-2V8h-2v7h2v2H9v-2h1V8H8v2H6z" fill="#111"/></svg><input value="默认: 宋体" aria-label="字体"></span>
    <span class="combo off num"><input value="0" aria-label="字号"></span>
    <button class="letter"><b>B</b></button><button class="letter"><b><i>I</i></b></button><button class="letter"><b><u>U</u></b></button><button><svg><use href="#sup"/></svg></button><button><svg><use href="#sub"/></svg></button><button><svg><use href="#supsub"/></svg></button><button class="letter dim">αβ</button><button class="letter dim big">A<sup>▴</sup></button><button class="letter dim">A<sup>▾</sup></button><button><svg><use href="#alignl"/></svg></button><button class="dd"></button><button><svg><use href="#vlines"/></svg></button><button class="dd"></button><button class="letter tcolor"><b>A</b></button><button class="dd wide"></button>
    <button class="more"></button>
  </div>
  <div class="bar">
    <button><svg><use href="#bucket"/></svg></button><button class="dd wide dim"></button><button><svg><use href="#palette"/></svg></button><button class="dd wide"></button><button><svg><use href="#pen"/></svg></button><button class="dd wide dim"></button><button><svg><use href="#bulb"/></svg></button>
    <span class="combo off num line"><svg viewBox="0 0 32 18"><path d="M0 9h32" stroke="#000"/></svg><input value="实" aria-label="线型"></span>
    <span class="combo off num"><input value="0" aria-label="线宽"></span>
    <button class="swatch" aria-label="图案颜色"></button><button class="dd wide dim"></button>
    <span class="combo off num"><input value="0" aria-label="图案宽度"></span>
    <button><svg><use href="#hatch"/></svg></button><button class="dd dim"></button><button><svg><use href="#bord"/></svg></button><button class="dd"></button><button><svg><use href="#merge"/></svg></button>
    <button class="more"></button>
  </div>
  <div class="bar">
    <button><svg><use href="#mask"/></svg></button><button><svg><use href="#maskx"/></svg></button><hr><button><svg><use href="#swap"/></svg></button><button><svg><use href="#swap2"/></svg></button><hr><button><svg><use href="#lock"/></svg></button>
    <button class="more"></button>
  </div>
  <div class="bar">
    <button><svg><use href="#db"/></svg></button><button><svg><use href="#db-y"/></svg></button><button><svg><use href="#db-o"/></svg></button><button><svg><use href="#db-g"/></svg></button><button><svg><use href="#db-t"/></svg></button><button><svg><use href="#db-x"/></svg></button>
    <button class="more"></button>
  </div>
</div>

<main class="body">
  <aside class="docktabs">
    <button class="on t1">项目管理器<span> (1)</span></button>
    <button class="t2">快速帮助</button>
    <button class="t2">消息日志</button>
    <button class="on t3">提示日志<span> (10)</span></button>
  </aside>
  <div class="vbars">
    <div class="vbar">
      <div><button class="sel"><svg><use href="#arrow"/></svg></button></div>
      <div><button><svg><use href="#zin"/></svg></button></div>
      <div><button><svg><use href="#zout"/></svg></button></div>
      <div><button><svg><use href="#cross"/></svg></button></div>
      <div><button><svg><use href="#region"/></svg></button><button class="dd"></button></div>
      <div><button><svg><use href="#range"/></svg></button></div>
      <div><button><svg><use href="#blob"/></svg></button><button class="dd"></button></div>
      <div><button><svg><use href="#runner"/></svg></button><button class="dd"></button></div>
      <div><button><svg><use href="#dots"/></svg></button></div>
      <div><button class="letter"><b>T</b></button></div>
      <div><button><svg><use href="#regiona"/></svg></button></div>
      <div><button><svg><use href="#arr"/></svg></button><button class="dd"></button></div>
      <div><button><svg><use href="#line"/></svg></button><button class="dd"></button></div>
      <div><button><svg><use href="#rect"/></svg></button><button class="dd"></button></div>
      <div><button><svg><use href="#hand"/></svg></button></div>
      <div><button><svg><use href="#eq"/></svg></button><button class="dd"></button></div>
      <div><button><svg><use href="#gobj"/></svg></button><button class="dd"></button></div>
      <div><button><svg><use href="#hand2"/></svg></button></div>
      <div><button><svg><use href="#cube"/></svg></button></div>
      <button class="vmore"></button>
    </div>
    <div class="vbar narrow">
      <div><button><svg><use href="#lines4"/></svg></button></div>
      <div><button><svg><use href="#rings"/></svg></button></div>
      <div><button><svg><use href="#legend"/></svg></button></div>
      <div><button><svg><use href="#star"/></svg></button></div>
      <div><button><svg><use href="#scale"/></svg></button></div>
      <div><button><svg><use href="#clock"/></svg></button></div>
      <div><button><svg><use href="#stamp"/></svg></button></div>
      <div><button><svg><use href="#tgrid"/></svg></button></div>
      <button class="vmore"></button>
    </div>
  </div>
  <section class="workspace">
    <strong class="layer">1</strong>
    <div class="sheet">
      <svg class="plot" viewBox="407 253 719 549" shape-rendering="crispEdges">
        <path d="M507.500 315.500h411v394h-411z" fill="#fff" stroke="#000"/>
        <path d="M508 316h409v393H508z" fill="#0000ff"/>
        <path d="M781 316h68v65h-68z" fill="#2424ff"/>
        <path d="M781 381h68v66h-68z" fill="#ffd4d4"/><path d="M849 381h68v66h-68z" fill="#ff9e9e"/>
        <path d="M508 447h68v65h-68z" fill="#ff0000"/><path d="M576 447h68v65h-68zM781 447h68v65h-68z" fill="#8c8cff"/><path d="M644 447h68v65h-68z" fill="#5858ff"/><path d="M712 447h69v65h-69z" fill="#ff8c8c"/><path d="M849 447h68v65h-68z" fill="#9e9eff"/>
        <path d="M576 512h68v66h-68z" fill="#ff8c8c"/><path d="M644 512h68v66h-68z" fill="#ff5858"/><path d="M712 512h69v66h-69z" fill="#5858ff"/><path d="M781 512h68v66h-68z" fill="#1212ff"/>
        <path d="M500 348.500h7M500 480.500h7M500 611.500h7M542.500 710v7M610.500 710v7M678.500 710v7M747.500 710v7M815.500 710v7M883.500 710v7" stroke="#000"/>
        <g class="tick"><text x="486" y="354">6</text><text x="486" y="486">4</text><text x="486" y="617">2</text>
        <text transform="translate(547 731) rotate(-90)">1</text><text transform="translate(615 731) rotate(-90)">2</text><text transform="translate(683 731) rotate(-90)">3</text><text transform="translate(752 731) rotate(-90)">4</text><text transform="translate(820 731) rotate(-90)">5</text><text transform="translate(888 731) rotate(-90)">6</text></g>
        <g class="axis"><text x="677" y="764">X Title</text><text x="992" y="302">Z Title</text><text transform="translate(468 548) rotate(-90)">Y Title</text></g>
        <g><path d="M1017 328h22v13h-22z" fill="#ff0000"/><path d="M1017 340h22v13h-22z" fill="#ff1212"/><path d="M1017 353h22v13h-22z" fill="#ff2424"/><path d="M1017 365h22v13h-22z" fill="#ff3535"/><path d="M1017 377h22v13h-22z" fill="#ff4747"/><path d="M1017 389h22v13h-22z" fill="#ff5858"/><path d="M1017 402h22v13h-22z" fill="#ff6a6a"/><path d="M1017 414h22v13h-22z" fill="#ff7b7b"/><path d="M1017 426h22v13h-22z" fill="#ff8c8c"/><path d="M1017 439h22v13h-22z" fill="#ff9e9e"/><path d="M1017 451h22v13h-22z" fill="#ffb0b0"/><path d="M1017 463h22v13h-22z" fill="#ffc2c2"/><path d="M1017 475h22v13h-22z" fill="#ffd4d4"/><path d="M1017 488h22v13h-22z" fill="#ffe5e5"/><path d="M1017 500h22v13h-22z" fill="#fff7f7"/><path d="M1017 512h22v13h-22z" fill="#f7f7ff"/><path d="M1017 525h22v13h-22z" fill="#e5e5ff"/><path d="M1017 537h22v13h-22z" fill="#d4d4ff"/><path d="M1017 549h22v13h-22z" fill="#c2c2ff"/><path d="M1017 562h22v13h-22z" fill="#b0b0ff"/><path d="M1017 574h22v13h-22z" fill="#9e9eff"/><path d="M1017 586h22v13h-22z" fill="#8c8cff"/><path d="M1017 598h22v13h-22z" fill="#7b7bff"/><path d="M1017 611h22v13h-22z" fill="#6a6aff"/><path d="M1017 623h22v13h-22z" fill="#5858ff"/><path d="M1017 635h22v13h-22z" fill="#4747ff"/><path d="M1017 648h22v13h-22z" fill="#3535ff"/><path d="M1017 660h22v13h-22z" fill="#2424ff"/><path d="M1017 672h22v13h-22z" fill="#1212ff"/><path d="M1017 685h22v12h-22z" fill="#0000ff"/></g>
        <path d="M1016.500 315.500h23v394h-23zM1040 328.500h6M1040 402.500h6M1040 476.500h6M1040 549.500h6M1040 623.500h6M1040 697.500h6" fill="none" stroke="#000"/>
        <g class="scale"><text x="1050" y="332">1.000</text><text x="1050" y="405">0.8000</text><text x="1050" y="479">0.6000</text><text x="1050" y="553">0.4000</text><text x="1050" y="627">0.2000</text><text x="1050" y="701">0.000</text></g>
      </svg>
    </div>
  </section>
  <div class="vbars right">
    <div class="vbar narrow">
      <div><button><svg><use href="#al1"/></svg></button></div>
      <div><button><svg><use href="#al2"/></svg></button></div>
      <hr>
      <div><button><svg><use href="#al3"/></svg></button></div>
      <div><button><svg><use href="#al4"/></svg></button></div>
      <hr>
      <div><button><svg><use href="#al3"/></svg></button></div>
      <div><button><svg><use href="#al1"/></svg></button></div>
    </div>
  </div>
  <aside class="appstab"><button>Apps</button></aside>
</main>

<div class="row bottom">
  <div class="bar">
    <button><svg><use href="#cat"/></svg></button><button><svg><use href="#catx"/></svg></button><hr><button><svg><use href="#face"/></svg></button><button><svg><use href="#mg"/></svg></button><button><svg><use href="#mr"/></svg></button><hr><button><svg><use href="#mb"/></svg></button>
    <button class="more"></button>
  </div>
  <div class="bar">
    <button><svg><use href="#rotl"/></svg></button><button><svg><use href="#rotr"/></svg></button><button><svg><use href="#tiltl"/></svg></button><button><svg><use href="#tiltr"/></svg></button><button><svg><use href="#trap"/></svg></button><button><svg><use href="#trap2"/></svg></button><button><svg><use href="#box3"/></svg></button><button><svg><use href="#box4"/></svg></button><button><svg><use href="#expand"/></svg></button><button><svg><use href="#axes"/></svg></button><button><svg><use href="#cube2"/></svg></button>
    <span class="combo off num"><input value="10" aria-label="角度"></span>
    <button class="more"></button>
  </div>
  <div class="bar">
    <button><svg><use href="#cube3"/></svg></button><button class="dd"></button><hr><button><svg><use href="#cube4"/></svg></button><button class="dd"></button><button><svg><use href="#cube5"/></svg></button><button class="dd"></button><button><svg><use href="#gridg"/></svg></button><button class="dd"></button><button><svg><use href="#gridw"/></svg></button><button class="dd"></button><button><svg><use href="#surf"/></svg></button>
    <button class="more"></button>
  </div>
  <div class="bar">
    <button><svg><use href="#line"/></svg></button><button class="dd"></button><button><svg><use href="#scat"/></svg></button><button class="dd"></button><button><svg><use href="#lsym"/></svg></button><button class="dd"></button><button><svg><use href="#cols"/></svg></button><button class="dd"></button><button><svg><use href="#contour"/></svg></button><button class="dd"></button><button><svg><use href="#boxp"/></svg></button><button class="dd"></button><button><svg><use href="#area"/></svg></button><button class="dd"></button><button><svg><use href="#polar"/></svg></button><button class="dd"></button><button><svg><use href="#candle"/></svg></button><button class="dd"></button><button><svg><use href="#stack"/></svg></button>
    <button class="more"></button>
  </div>
</div>

<footer class="status">
  <span class="hint">[Book1]Sheet1!B[2]:G[7] Z Title 单击=选择全部等高线, 单击两次=选择当前等高线,右击弹出选项</span>
  <span class="cell">--</span><span class="cell gap"></span><span class="cell">AU : 开</span><span class="cell">Light Grids</span><span class="cell">1:VM4</span><span class="cell">1:[Graph3]1!1</span><span class="cell">弧度</span>
  <span class="mark">https://blog.csdn.net/qq_40459275</span>
</footer>

<div class="dialog" role="dialog" aria-label="绘图细节 - 绘图属性">
  <header>
    <svg viewBox="0 0 19 17"><path d="M.5 .5h18v16H.5z" fill="#eef2f6" stroke="#9aa4b0"/><path d="M2 3h9v12H2z" fill="#3d8f86"/><path d="M12 3h5v6h-5z" fill="#fff"/><path d="M16 3h1v5h-1z" fill="#5ba85b"/></svg>
    <h2>绘图细节 - 绘图属性</h2>
    <button aria-label="帮助">?</button>
    <button aria-label="关闭"><svg viewBox="0 0 14 14"><path d="M1 1l12 12M13 1L1 13" stroke="#111"/></svg></button>
  </header>
  <div class="tabs"><button class="on">颜色映射/等高线</button><button>标签</button></div>
  <div class="panel">
    <p>单击列标签或单一单元格进行编辑。双击级别单元格以输入数值</p>
    <div class="upper">
      <div class="listbox">
        <div class="listview">
          <table>
            <thead><tr><th><span>级别<svg><use href="#pencil"/></svg></span></th><th class="hot"><span>填充<svg><use href="#pencil"/></svg></span></th><th class="narrowth"><span>线<svg><use href="#pencil"/></svg></span></th><th class="lab"><span>标签<svg><use href="#pencil"/></svg></span></th></tr></thead>
            <tbody>
              <tr><td>&lt; 0</td><td></td><td></td><td></td></tr>
              <tr><td>0</td><td style="background:#0000ff"></td><td></td><td><input type="checkbox" aria-label="标签 0"></td></tr>
              <tr><td>0.03333</td><td style="background:#1212ff"></td><td></td><td><input type="checkbox" aria-label="标签 0.03333"></td></tr>
              <tr><td>0.06667</td><td style="background:#2424ff"></td><td></td><td><input type="checkbox" aria-label="标签 0.06667"></td></tr>
              <tr><td>0.1</td><td style="background:#3535ff"></td><td></td><td><input type="checkbox" aria-label="标签 0.1"></td></tr>
              <tr><td>0.13333</td><td style="background:#4747ff"></td><td></td><td><input type="checkbox" aria-label="标签 0.13333"></td></tr>
              <tr><td>0.16667</td><td style="background:#5858ff"></td><td></td><td><input type="checkbox" aria-label="标签 0.16667"></td></tr>
              <tr><td>0.2</td><td style="background:#6a6aff"></td><td></td><td><input type="checkbox" aria-label="标签 0.2"></td></tr>
              <tr><td>0.23333</td><td style="background:#7b7bff"></td><td></td><td><input type="checkbox" aria-label="标签 0.23333"></td></tr>
              <tr><td>0.26667</td><td style="background:#8c8cff"></td><td></td><td><input type="checkbox" aria-label="标签 0.26667"></td></tr>
            </tbody>
          </table>
        </div>
        <div class="vscroll"><i class="chev up"></i><b></b><i class="chev"></i></div>
        <div class="hscroll"><i class="chev lt"></i><b></b><i class="chev rt"></i></div>
      </div>
      <div class="side">
        <fieldset class="levels"><legend>级别</legend><button class="btn" disabled>插入<span>(I)</span></button><button class="btn" disabled>删除<span>(D)</span></button></fieldset>
        <fieldset class="theme"><legend>颜色映射主题</legend>
          <label class="check"><input type="checkbox" checked>只包括级别和填充颜色</label>
          <div class="pair"><button class="btn">复制</button><button class="btn" disabled>粘贴</button></div>
          <div class="pair close"><button class="btn">保存<span>...</span></button><button class="btn">加载<span>...</span></button></div>
        </fieldset>
      </div>
    </div>
    <div class="lower">
      <div class="lcol">
        <fieldset class="missing"><legend>缺失值</legend>
          <span class="sel short"><select aria-label="条件"><option>=</option></select></span>
          <input class="field" value="-9999" aria-label="缺失值">
          <button class="color" aria-label="缺失值颜色"></button>
        </fieldset>
        <div class="fill">
          <label class="check"><input type="checkbox" checked>颜色填充<span>(F)</span></label>
          <label class="check"><input type="radio" name="fill">按等高线填充<span>(F)</span></label>
          <label class="check second"><input type="radio" name="fill" checked>按网格线填充<span>(G)</span></label>
        </div>
        <div class="mode"><label for="mode">缩放模式<span>(R)</span></label><span class="sel"><select id="mode"><option>常规</option></select></span></div>
      </div>
      <fieldset class="border"><legend>边界</legend>
        <label class="check"><input type="checkbox" checked>与等高线一致</label>
        <label class="check off"><input type="checkbox" checked disabled>显示</label>
        <div class="opts">
          <label for="bc">颜色</label><span class="sel gray"><i class="ink"></i><select id="bc" disabled><option>黑</option></select></span>
          <label for="bs">样式</label><span class="sel white tall"><i class="dash"></i><select id="bs" disabled><option>实线</option></select></span>
          <label for="bw">宽度</label><span class="sel white mono"><select id="bw" disabled><option>0.5</option></select></span>
        </div>
      </fieldset>
    </div>
    <div class="alpha"><label for="al">透明<span>(T)</span></label><input id="al" type="range" min="0" max="100" value="0"><span class="spin"><input value="0" aria-label="透明度"><button>▲</button><button>▼</button></span><span>%</span></div>
  </div>
  <div class="actions"><button class="btn a">&gt;&gt;</button><button class="btn b">工作簿</button><button class="btn def">确定</button><button class="btn">取消</button><button class="btn" disabled>应用<span>(A)</span></button></div>
</div>
</body>
</html>
```
FILE: styles.css
```css
* { box-sizing: border-box; }

body {
  margin: 0;
  min-height: 100vh;
  display: flex;
  flex-direction: column;
  position: relative;
  overflow: hidden;
  background: linear-gradient(to right, #e8eafb, #f4f6fe 1500px);
  font: 14px/20px "Open Sans", "Noto Sans CJK SC", sans-serif;
  color: #000;
}

button, input, select { font: inherit; color: inherit; }
button { padding: 0; border: 0; background: none; flex: none; }
.sprite { display: none; }

/* window title */
.titlebar { height: 29px; display: flex; align-items: center; background: #fff; padding: 0 5px 0 1px; }
.titlebar h1 { margin: 0 0 0 4px; font: 15px/24px "Noto Sans", sans-serif; color: #8f8f8f; flex: 1; white-space: nowrap; }
.logo { width: 22px; height: 22px; }
.wincontrols { display: flex; }
.wincontrols button { width: 58px; height: 28px; }
.wincontrols svg, .dialog header button svg { width: 14px; height: 14px; fill: none; stroke: #8f8f8f; vertical-align: middle; }

/* toolbars */
.row { display: flex; height: 29px; align-items: flex-start; }
.bar {
  position: relative;
  display: flex;
  align-items: center;
  height: 28px;
  padding-left: 10px;
  margin-right: 1px;
  border-bottom: 1px solid #8f8fae;
  border-radius: 4px 0 0 4px;
  background: linear-gradient(#fafbff, #dcdcea 60%, #bcbcd2);
}
.bar::before { content: ""; position: absolute; left: 4px; top: 6px; width: 2px; height: 17px; background: repeating-linear-gradient(#a4a4b4 0 2px, transparent 2px 4px); }
.bar > button, .vbar div > button { width: 22px; height: 22px; display: flex; align-items: center; justify-content: center; }
.bar button svg, .vbar button svg { width: 18px; height: 18px; }
.bar hr { width: 1px; height: 21px; margin: 0 4px 0 3px; border: 0; background: #c3c3c9; box-shadow: 1px 0 #f5f5fa; }
.bar > .dd, .vbar div > .dd { width: 9px; }
.bar > .dd.wide { width: 13px; }
.dd::after { content: ""; border: solid transparent; border-width: 4px 3px 0; border-top-color: #000; }
.dd.dim::after { border-top-color: #888; }
.bar > .more {
  align-self: stretch;
  width: 13px;
  height: 28px;
  align-items: flex-end;
  padding-bottom: 3px;
  background: linear-gradient(#b4b4ce, #dcdcee);
  border-radius: 0 4px 4px 0;
}
.more::after { content: ""; width: 6px; height: 6px; background: #000; clip-path: polygon(0 0, 100% 0, 100% 17%, 50% 17%, 50% 50%, 100% 50%, 50% 100%, 0 50%, 50% 50%, 50% 17%, 0 17%); }
.letter { font: 18px/20px "Liberation Serif", serif; }
.letter.dim { color: #6a6e7e; font-size: 17px; }
.letter.big { font-size: 22px; }
.letter sup { font: 8px/8px "DejaVu Sans", sans-serif; align-self: flex-start; }
.tcolor b { line-height: 15px; border-bottom: 4px solid #000080; color: #000080; }
.combo { position: relative; display: flex; align-items: center; width: 74px; height: 26px; margin: 0 2px 0 1px; background: #fff; color: #333; }
.combo::after { content: ""; position: absolute; right: 5px; top: 12px; border: solid transparent; border-width: 4px 3px 0; border-top-color: #333; }
.combo input { width: 100%; min-width: 0; border: 0; padding: 0 2px; background: none; outline: 0; }
.combo.off { border: 2px solid #a5a5a5; background: #f0f0f0; color: #888; margin: 0 2px; }
.combo.off::after { top: 10px; border-top-color: #888; }
.combo.off.font { width: 158px; margin: 0 3px; }
.combo.font svg { width: 18px; height: 18px; margin: 0 4px; flex: none; }
.combo.off.line { margin-left: 0; }
.combo.line svg { width: 32px; height: 18px; margin: 0 2px; flex: none; }
.bar > .swatch { width: 36px; height: 20px; margin-left: 4px; border: 2px solid #a5a5b0; background: #e8ecf8; }

/* menu bar */
.menubar { position: relative; height: 28px; display: flex; align-items: center; padding-left: 10px; }
.menubar::before { content: ""; position: absolute; left: 4px; top: 6px; width: 2px; height: 17px; background: repeating-linear-gradient(#a4a4b4 0 2px, transparent 2px 4px); }
.childicon { width: 20px; height: 20px; margin-right: 10px; }
.menubar a { color: #000; text-decoration: none; margin-right: 15px; }
.childcontrols { margin-left: auto; display: flex; gap: 11px; padding-right: 7px; }
.childcontrols svg { width: 10px; height: 10px; display: block; fill: none; stroke: #000; }

/* work area */
.body { flex: 1; display: flex; min-height: 0; }
.docktabs { width: 23px; padding-top: 4px; display: flex; flex-direction: column; gap: 14px; }
.docktabs button, .appstab button { writing-mode: vertical-rl; text-orientation: sideways; width: 23px; padding: 4px 0; text-align: left; color: #777; background: #f0f0f0; border: solid #d5d5dc; border-width: 0 1px 1px 0; line-height: 22px; }
.docktabs button { font-size: 15px; }
.docktabs span { font: 13px/22px "Liberation Mono", monospace; white-space: pre; }
.docktabs .t1 { height: 134px; }
.docktabs .t2 { height: 88px; }
.docktabs .t3 { height: 128px; }
.docktabs .on { color: #000; }
.vbars { width: 37px; padding-left: 2px; }
.vbar { position: relative; width: 35px; padding-top: 10px; border-radius: 4px; border-right: 1px solid #9a9ab4; background: linear-gradient(to right, #fafbff, #dcdcea 60%, #b8b8cf); }
.vbar::before { content: ""; position: absolute; left: 5px; top: 4px; width: 22px; height: 2px; background: repeating-linear-gradient(to right, #a4a4b4 0 2px, transparent 2px 4px); }
.vbar.narrow { width: 26px; }
.vbar.narrow::before { width: 15px; }
.vbar div { display: flex; height: 22px; padding-left: 2px; }
.vbar div > .dd { margin-left: -2px; }
.vbar .sel { border: 1px solid #0078d7; background: #d8e6f5; }
.vbar .vmore { display: flex; width: 100%; height: 12px; justify-content: flex-end; align-items: center; padding-right: 3px; background: linear-gradient(to right, #e4e4f2, #b4b4ce); }
.vmore::after { content: ""; width: 6px; height: 6px; background: #000; clip-path: polygon(0 0, 17% 0, 17% 50%, 50% 50%, 50% 0, 100% 50%, 50% 100%, 50% 50%, 17% 50%, 17% 100%, 0 100%); }
.vbars.right { width: 40px; padding-left: 4px; }
.vbars.right .vbar { height: 300px; }
.vbar hr { width: 22px; height: 1px; margin: 3px 1px; border: 0; background: #c3c3c9; }
.workspace { flex: 1; min-width: 0; position: relative; overflow: hidden; background: #c0c0c0; border: solid #696969; border-width: 2px 0 0 2px; box-shadow: 2px 2px #f8f8fa; margin-left: 1px; }
.layer { display: inline-block; padding: 2px 7px; font: bold 20px/22px "Liberation Sans", sans-serif; }
.sheet { position: absolute; left: 344px; top: 136px; background: #fff; width: 760px; height: 549px; }
.plot { display: block; width: 719px; height: 549px; font-family: "Liberation Mono", monospace; }
.tick { font-size: 15px; }
.axis { font-size: 17px; }
.scale { font-size: 10px; }
.appstab { width: 22px; padding-top: 2px; }
.appstab button { height: 62px; color: #222; line-height: 18px; }

.row.bottom { height: 32px; padding: 1px 0 0 61px; }
.row.bottom .bar { height: 29px; }

/* status bar */
.status { position: relative; height: 24px; display: flex; align-items: center; background: #f0f0f0; border-top: 1px solid #d0d0d4; border-bottom: 2px solid #44464a; padding-right: 3px; white-space: nowrap; }
.hint { flex: 1; padding-left: 4px; }
.cell { padding: 0 2px 0 5px; border-right: 1px solid #cfcfcf; line-height: 21px; font-size: 13px; }
.cell:nth-last-child(2) { border: 0; }
.cell.gap { width: 10px; padding: 0; height: 21px; }
.mark { position: absolute; right: 10px; top: -6px; font-size: 15px; color: rgba(255, 255, 255, .7); text-shadow: 0 0 1px rgba(90, 90, 90, .6); }

/* plot details dialog */
.dialog { position: absolute; top: 215px; right: 16px; width: 779px; height: 763px; display: flex; flex-direction: column; border: 1px solid #5f5f66; background: #f0f0f0; box-shadow: 0 5px 16px rgba(0, 0, 0, .32); font: 15px/16px "Noto Sans CJK SC", sans-serif; }
.dialog header { display: flex; align-items: center; height: 38px; padding: 0 2px 0 9px; background: #fff; flex: none; }
.dialog header > svg { width: 19px; height: 17px; }
.dialog h2 { flex: 1; margin: 0 0 2px 6px; font: 15px/20px "Noto Sans CJK SC", sans-serif; }
.dialog header button { width: 57px; height: 32px; padding-bottom: 3px; font: 18px/24px "Open Sans", sans-serif; }
.tabs { display: flex; align-items: flex-end; padding: 9px 0 0 38px; }
.tabs button { position: relative; height: 25px; width: 50px; border: 1px solid #d9d9d9; border-width: 1px 1px 0 0; padding: 0 0 2px 4px; text-align: left; white-space: nowrap; }
.tabs .on { width: 127px; height: 28px; margin-bottom: -1px; border-left-width: 1px; padding-left: 6px; background: #fff; z-index: 1; }
.panel { height: 633px; margin-left: 38px; border: solid #d9d9d9; border-width: 1px 0 1px 1px; background: #fff; }
.panel p { margin: 0 0 2px 21px; line-height: 24px; white-space: nowrap; }
.upper { display: flex; gap: 8px; padding-left: 21px; }
.listbox { margin-top: 3px; width: 452px; height: 281px; border: 1px solid #828790; display: grid; grid-template: 257px 21px / 429px 19px; padding: 1px; background: #f0f0f0; }
.listview { overflow: hidden; background: #fff; }
.listview table { width: 429px; table-layout: fixed; border-collapse: collapse; }
.listview th { width: 70px; height: 24px; padding: 0; font-weight: 400; }
.listview th.lab { width: 219px; border-left: 1px solid #dcdcdc; }
.listview th.hot { background: #d8e9f8; border-left: 1px solid #dcdcdc; }
.listview th span { display: flex; align-items: center; justify-content: space-between; width: 70px; padding: 0 7px; }
.listview th.narrowth span { width: 55px; }
.listview th svg { width: 14px; height: 18px; }
.listview td { height: 24px; padding: 2px 0 0 3px; font: 13px/16px "Liberation Mono", monospace; }
.listview td:last-child { padding: 0 0 0 10px; }
.listview td input { appearance: none; display: block; width: 11px; height: 11px; margin: 0; border: 1px solid #707070; background: #fff; }
.vscroll { display: flex; flex-direction: column; align-items: center; justify-content: space-between; height: 257px; padding: 9px 0; }
.vscroll b { width: 19px; height: 60px; background: #cdcdcd; margin: 5px 0 auto; }
.hscroll { display: flex; align-items: center; padding: 0 7px 0 9px; width: 429px; background: #f0f0f0; }
.hscroll b { width: 381px; height: 19px; margin: 0 10px 0 5px; background: #cdcdcd; }
.chev { display: block; flex: none; width: 7px; height: 7px; border: solid #505050; border-width: 0 2px 2px 0; transform: rotate(45deg); }
.chev.up { transform: rotate(225deg); }
.chev.lt { transform: rotate(135deg); }
.chev.rt { transform: rotate(-45deg); }
.side { width: 256px; display: flex; flex-direction: column; gap: 9px; }
fieldset { display: flex; flex-direction: column; min-width: 0; margin: 0; padding: 0; border: 1px solid #dcdcdc; }
legend { padding: 0 4px; height: 16px; line-height: 16px; }
.levels { width: 116px; height: 98px; padding: 7px 0 0 16px; gap: 15px; }
.theme { height: 180px; padding: 11px 0 0 16px; gap: 10px; }
.levels legend, .theme legend { margin-left: -11px; }
.border legend { margin-left: -9px; }
.missing legend { margin-left: -4px; }
.pair { display: flex; flex-direction: column; gap: 10px; }
.pair.close { gap: 5px; margin-top: -3px; }
.btn { width: 78px; height: 24px; border: 1px solid #adadad; background: #e1e1e1; line-height: 18px; padding-bottom: 2px; }
.btn:disabled { background: #ccc; border-color: #bfbfbf; color: #838383; }
.btn span, label span, .alpha > span { font: 13px/16px "Liberation Mono", monospace; }
.check { display: flex; align-items: center; height: 16px; white-space: nowrap; }
.check input { appearance: none; position: relative; flex: none; width: 16px; height: 16px; margin: 0 5px 0 0; border: 1px solid #333; background: #fff; }
.check input[type=checkbox]:checked::after { content: ""; position: absolute; left: 5px; top: 1px; width: 5px; height: 10px; border: solid #333; border-width: 0 1px 1px 0; transform: rotate(40deg); }
.check input[type=radio] { border-radius: 50%; margin-right: 4px; }
.check input[type=radio]:checked::after { content: ""; position: absolute; inset: 2px; border-radius: 50%; background: #333; }
.check.off { color: #838383; }
.check.off input, .check.off input:checked::after { border-color: #c5c5c5 !important; }
.lower { display: flex; justify-content: space-between; align-items: flex-start; padding: 3px 136px 0 16px; }
.lcol { padding-top: 13px; }
.missing { flex-direction: row; align-items: flex-start; width: 259px; height: 66px; padding: 14px 0 0 8px; }
.sel { position: relative; display: block; width: 127px; height: 23px; border: 1px solid #adadad; background: #e1e1e1; }
.sel select { appearance: none; width: 100%; height: 100%; padding: 0 3px; border: 0; background: none; opacity: 1; line-height: 20px; }
.sel::after { content: ""; position: absolute; right: 6px; top: 6px; width: 6px; height: 6px; border: solid #444; border-width: 0 1px 1px 0; transform: rotate(45deg); pointer-events: none; }
.sel.short { width: 49px; margin-right: 15px; }
.sel.white { background: #fff; border-color: #ccc; color: #838383; width: 174px; }
.sel.white::after { border-color: #b5b5b5; }
.sel.mono { font: 13px/16px "Liberation Mono", monospace; }
.sel.gray { background: #ccc; border-color: #bfbfbf; color: #838383; width: 174px; height: 22px; display: flex; align-items: center; }
.sel.gray::after { width: 0; height: 0; top: 8px; border: solid transparent; border-width: 6px 5px 0; border-top-color: #777; transform: none; }
.ink { width: 13px; height: 13px; margin: 0 4px 0 4px; background: #000; flex: none; }
.sel.tall { height: 28px; display: flex; align-items: center; background: linear-gradient(#f3f7fd, #f3f7fd) 2px 2px / 146px 22px no-repeat #fff; }
.sel.tall::after { top: 9px; }
.dash { width: 16px; height: 1px; margin: 0 6px 4px 4px; background: #000; flex: none; }
.field { width: 58px; height: 24px; margin-right: 10px; padding: 0 2px; border: 1px solid #7a7a7a; font: 13px/16px "Liberation Mono", monospace; }
.color { width: 110px; height: 23px; border: 2px solid; border-color: #a0a0a0 #eee #eee #a0a0a0; box-shadow: inset 1px 1px #555; background: #0000a0; }
.fill { display: grid; grid-template-columns: 110px auto; row-gap: 10px; padding: 15px 0 0 3px; }
.fill .second { grid-column: 2; }
.mode { display: flex; align-items: center; margin-top: 11px; }
.mode label { width: 127px; }
.border { width: 309px; height: 181px; padding: 10px 0 0 13px; gap: 11px; }
.opts { display: grid; grid-template-columns: 85px auto; row-gap: 8px; align-items: center; }
.alpha { display: flex; align-items: center; padding: 7px 0 0 16px; }
.alpha label { width: 100px; }
.alpha > input { appearance: none; width: 275px; height: 24px; margin: 0 14px 0 0; background: linear-gradient(#d2d6d6, #e7eaea) center / 100% 5px no-repeat; }
.alpha > input::-webkit-slider-thumb { appearance: none; width: 13px; height: 23px; background: #0078d7; clip-path: polygon(0 0, 100% 0, 100% 70%, 50% 100%, 0 70%); }
.spin { display: grid; grid-template: 12px 12px / 40px 20px; width: 62px; height: 26px; margin-right: 3px; border: 1px solid #7a7a7a; }
.spin input { grid-row: 1 / 3; border: 0; padding: 0 3px; width: 40px; font: 13px/16px "Liberation Mono", monospace; }
.spin button { border: 1px solid #aaa; background: #f0f0f0; font: 8px/9px "DejaVu Sans", sans-serif; }
.actions { display: flex; gap: 12px; padding: 17px 0 0 35px; }
.actions .btn { width: 72px; height: 26px; }
.actions .a { width: 36px; font: 15px/18px "Liberation Mono", monospace; }
.actions .b { width: 96px; }
.actions .def { border: 2px solid #0078d7; }
```
